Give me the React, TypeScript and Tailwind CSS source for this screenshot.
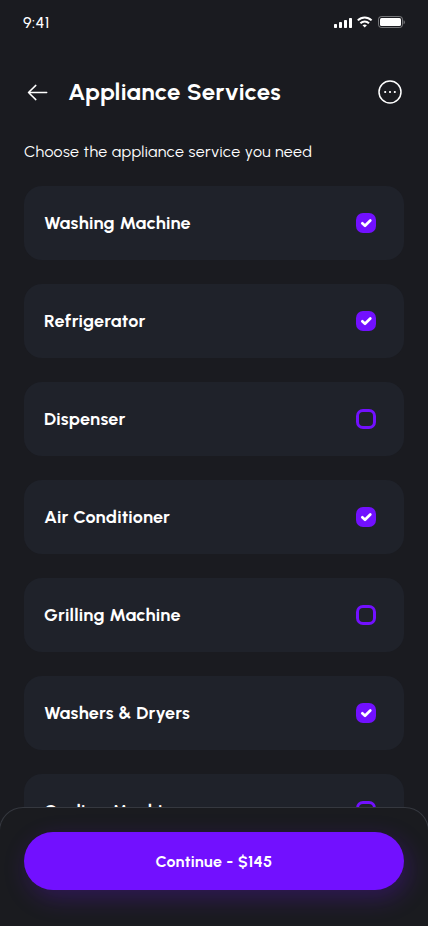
import { clsx } from "clsx";

const services = [
  { name: "Washing Machine", checked: true },
  { name: "Refrigerator", checked: true },
  { name: "Dispenser", checked: false },
  { name: "Air Conditioner", checked: true },
  { name: "Grilling Machine", checked: false },
  { name: "Washers & Dryers", checked: true },
  { name: "Cooling Machine", checked: false },
];

function StatusBar() {
  return (
    <div className="flex h-11 shrink-0 items-center justify-between px-[23px]">
      <span className="pt-0.5 text-base font-medium leading-5 tracking-[0.4px]">9:41</span>
      <svg width="71" height="12" viewBox="0 0 71 12" fill="none">
        {/* Signal */}
        <g fill="#fff">
          <rect x="0" y="8" width="3" height="4" rx="0.7" />
          <rect x="5" y="6" width="3" height="6" rx="0.7" />
          <rect x="10" y="4" width="3" height="8" rx="0.7" />
          <rect x="15" y="2" width="3" height="10" rx="0.7" />
        </g>
        {/* Wifi */}
        <g stroke="#fff" strokeWidth="2">
          <path d="M23.8 4.4C27.8 0.4 33.6 0.4 37.6 4.4" />
          <path d="M26.4 7.3C28.9 4.8 32.5 4.8 35 7.3" />
        </g>
        <path d="M28.5 9.2C29.8 8.1 31.6 8.1 32.9 9.2L30.7 11.6L28.5 9.2Z" fill="#fff" />
        {/* Battery */}
        <rect x="44.5" y="0.5" width="24" height="11" rx="2.8" stroke="#fff" strokeOpacity="0.4" />
        <rect x="46" y="2" width="21" height="8" rx="1.5" fill="#fff" />
        <path d="M69.6 4.2V8.2C71.2 7.5 71.2 4.9 69.6 4.2Z" fill="#fff" fillOpacity="0.45" />
      </svg>
    </div>
  );
}

function Header() {
  return (
    <header className="mt-6 flex h-12 items-center px-6">
      <button aria-label="Back" className="mr-4">
        <svg width="28" height="28" viewBox="0 0 28 28" fill="none" stroke="#fff" strokeWidth="1.5" strokeLinecap="round" strokeLinejoin="round">
          <path d="M22.7 14.5H4.5M11.8 7.4L4.5 14.5L11.8 21.6" />
        </svg>
      </button>
      <h1 className="text-2xl font-bold leading-8 whitespace-nowrap tracking-[0.32px]">Appliance Services</h1>
      <button aria-label="More" className="ml-auto">
        <svg width="28" height="28" viewBox="0 0 28 28" fill="none">
          <circle cx="14" cy="14" r="11" stroke="#fff" strokeWidth="1.5" />
          <g fill="#fff">
            <rect x="8.2" y="13" width="2" height="2" rx="0.7" />
            <rect x="13" y="13" width="2" height="2" rx="0.7" />
            <rect x="17.8" y="13" width="2" height="2" rx="0.7" />
          </g>
        </svg>
      </button>
    </header>
  );
}

function Checkbox({ checked }: { checked: boolean }) {
  return (
    <span
      className={clsx(
        "flex size-5 items-center justify-center rounded-[7px]",
        checked ? "bg-[#7210ff]" : "border-3 border-[#7210ff]"
      )}
    >
      {checked && (
        <svg width="20" height="20" viewBox="0 0 20 20" fill="none" stroke="#fff" strokeWidth="2.7" strokeLinecap="round" strokeLinejoin="round">
          <path d="M6.3 10.3L9 12.8L14.3 7.5" />
        </svg>
      )}
    </span>
  );
}

export default function App() {
  return (
    <div className="relative flex h-[926px] w-[428px] flex-col overflow-hidden bg-[#1a1b20] font-['Urbanist','Lato',sans-serif] text-white">
      <StatusBar />
      <Header />

      <p className="mt-6 px-6 text-base leading-6 whitespace-nowrap tracking-[0.38px]">
        Choose the appliance service you need
      </p>

      <ul className="mt-[22px] flex flex-col gap-6 px-6">
        {services.map((service) => (
          <li
            key={service.name}
            className="flex h-[74px] shrink-0 items-center justify-between rounded-[18px] bg-[#1f222a] pl-5 pr-7"
          >
            <span className="text-lg font-bold whitespace-nowrap tracking-[0.26px]">{service.name}</span>
            <Checkbox checked={service.checked} />
          </li>
        ))}
      </ul>

      <div className="absolute -inset-x-px bottom-0 h-[119px] rounded-t-3xl border border-b-0 border-[#35383f] bg-[#1a1b1f] px-6 pt-6">
        <button className="h-[58px] w-full rounded-full bg-[#7210ff] pt-0.5 text-base font-bold tracking-[0.33px] shadow-[4px_8px_24px_rgba(114,16,255,0.25)]">
          Continue - $145
        </button>
      </div>
    </div>
  );
}
